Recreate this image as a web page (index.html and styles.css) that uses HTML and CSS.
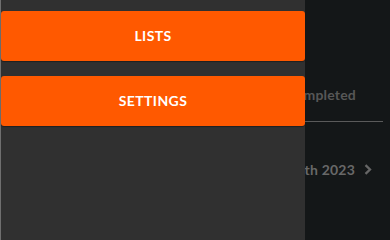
FILE: index.html
```html
<!DOCTYPE html>
<html>
<head>
<meta charset="utf-8">
<link rel="stylesheet" href="styles.css">
</head>
<body>
<main class="page">
  <div class="tabs">
    <span class="tab">Completed</span>
  </div>
  <div class="divider"></div>
  <div class="row">
    <span class="row-label">Month 2023</span>
    <svg class="chev" width="8" height="11" viewBox="0 0 8 11"><path d="M1.5 1.2 L6 5.5 L1.5 9.8" fill="none" stroke="#666666" stroke-width="2.3"/></svg>
  </div>
</main>
<nav class="drawer">
  <button class="drawer-btn">LISTS</button>
  <button class="drawer-btn">SETTINGS</button>
</nav>
</body>
</html>
```
FILE: styles.css
```css
html, body {
  margin: 0;
  padding: 0;
}
body {
  min-height: 100vh;
  overflow: hidden;
  background: #141718;
  font-family: Lato, "Noto Sans", sans-serif;
  position: relative;
}
.page {
  display: flex;
  flex-direction: column;
  padding-top: 86px;
}
.tabs {
  display: flex;
  justify-content: flex-end;
  padding-right: 34px;
}
.tab {
  color: #575757;
  font-size: 14px;
  font-weight: 700;
  line-height: 17px;
  letter-spacing: 0.2px;
}
.divider {
  height: 1px;
  margin: 18px 7px 0 305px;
  background: #5a5a5a;
}
.row {
  display: flex;
  justify-content: flex-end;
  align-items: center;
  gap: 9px;
  padding-right: 18px;
  margin-top: 39px;
  height: 17px;
}
.row-label {
  color: #686868;
  font-size: 14px;
  font-weight: 700;
  line-height: 17px;
  letter-spacing: 0.2px;
}
.chev {
  display: block;
}
.drawer {
  position: absolute;
  left: 0;
  top: 0;
  bottom: 0;
  width: 304px;
  background: #303030;
  border-left: 1px solid #6f6f6f;
  padding-top: 11px;
  display: flex;
  flex-direction: column;
  gap: 15px;
}
.drawer-btn {
  height: 50px;
  padding: 0 0 2px 0;
  border: 0;
  border-radius: 3px;
  background: #ff5900;
  color: #ffffff;
  font-family: Lato, "Noto Sans", sans-serif;
  font-weight: 700;
  font-size: 14px;
  letter-spacing: 0.4px;
  box-shadow: 0 1px 1px rgba(0,0,0,0.35);
  cursor: pointer;
}
```
